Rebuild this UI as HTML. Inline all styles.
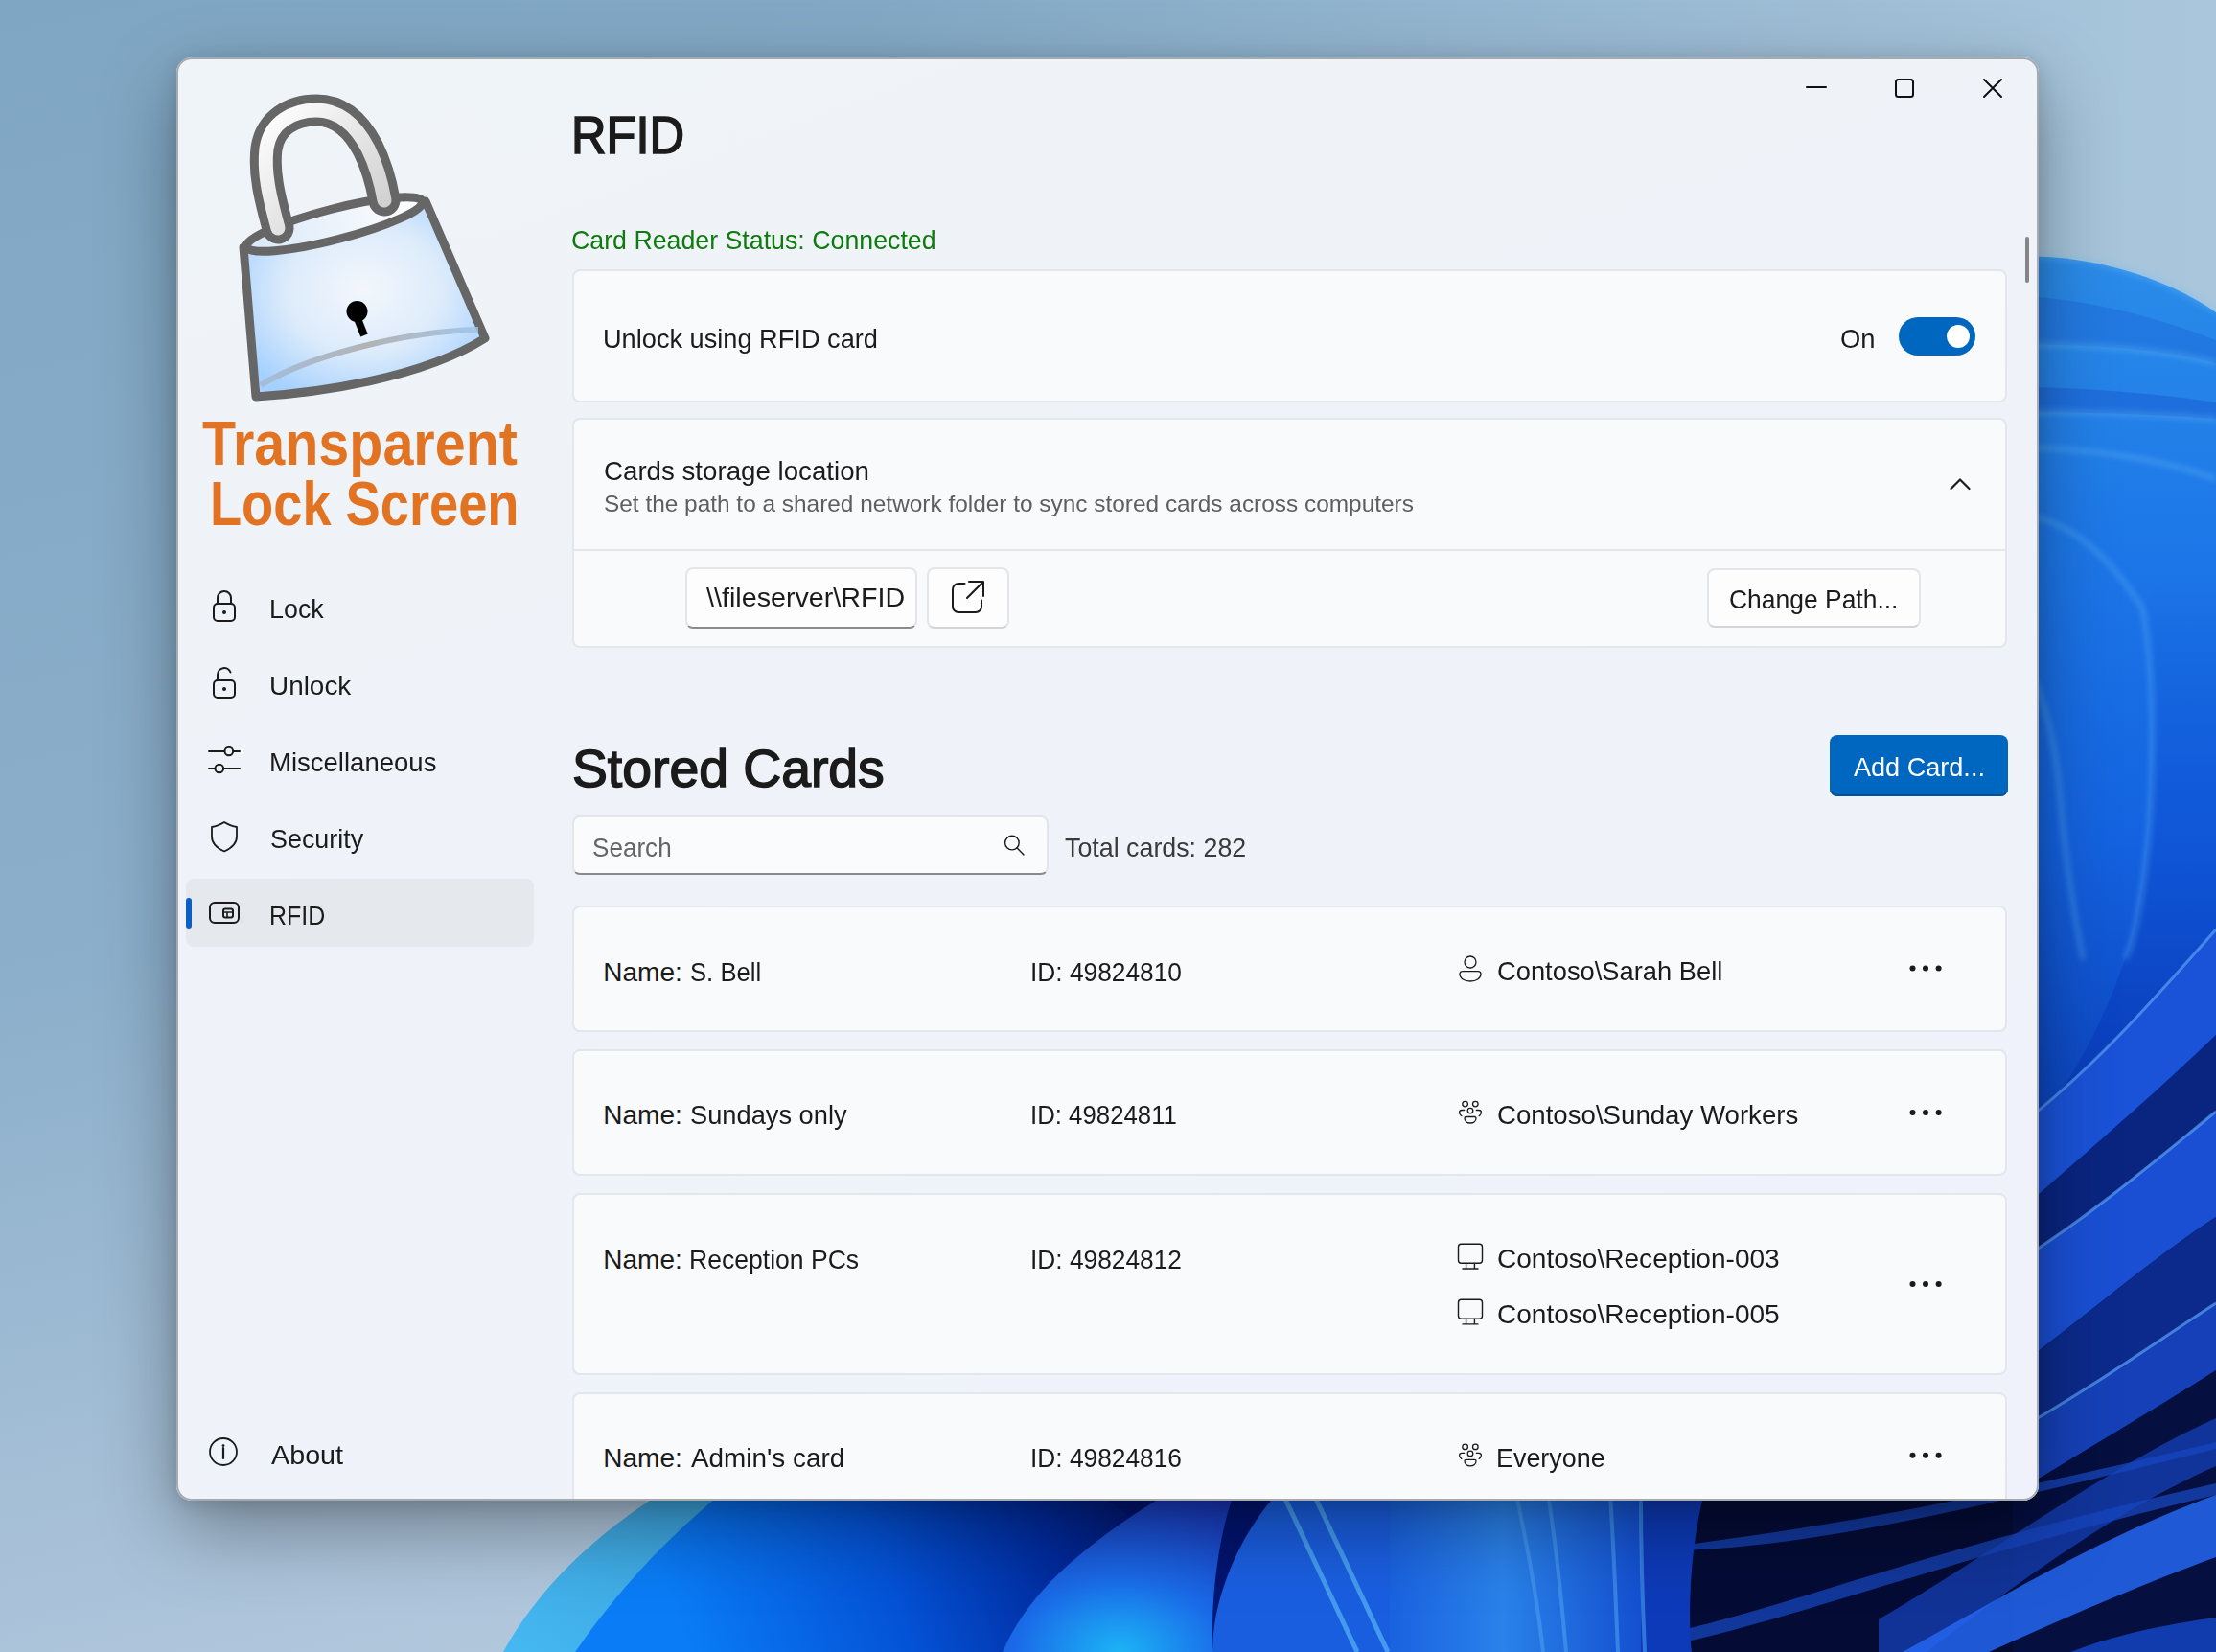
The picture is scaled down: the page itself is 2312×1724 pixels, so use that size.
<!DOCTYPE html>
<html><head><meta charset="utf-8">
<style>
html,body{margin:0;padding:0;width:2312px;height:1724px;overflow:hidden;background:#8fb0cc;}
.abs{position:absolute;}
.t{position:absolute;font-family:"Liberation Sans",sans-serif;line-height:1;white-space:nowrap;transform-origin:0 0;}
#win{position:absolute;left:184px;top:60px;width:1943px;height:1506px;border-radius:16px;
  box-shadow:0 30px 80px rgba(0,0,0,0.34),0 4px 20px rgba(0,0,0,0.14);}
#wininner{position:absolute;left:0;top:0;right:0;bottom:0;border-radius:16px;overflow:hidden;
  background:linear-gradient(160deg,#eff4f8 0%,#eff3f9 45%,#eff2fb 100%);}
#winborder{position:absolute;left:0;top:0;right:0;bottom:0;border-radius:16px;border:2px solid #a6a9ad;box-sizing:border-box;}
.card{position:absolute;background:#f9fafc;border:2px solid #e3e6ea;border-radius:8px;box-sizing:border-box;}
.btn{position:absolute;background:#fdfdfe;border:2px solid #e4e5e7;border-bottom-color:#d3d4d6;border-radius:8px;box-sizing:border-box;}
</style></head><body>
<svg class="abs" style="left:0;top:0" width="2312" height="1724" viewBox="0 0 2312 1724">
 <defs>
  <linearGradient id="bgbase" x1="0" y1="0" x2="0.3" y2="1">
   <stop offset="0" stop-color="#7fa6c3"/>
   <stop offset="0.55" stop-color="#8cafcb"/>
   <stop offset="1" stop-color="#b3c8dd"/>
  </linearGradient>
  <linearGradient id="bgtopr" x1="0" y1="0" x2="1" y2="0">
   <stop offset="0" stop-color="#a9c6dc" stop-opacity="0"/>
   <stop offset="1" stop-color="#a9c6dc" stop-opacity="1"/>
  </linearGradient>
  <linearGradient id="rstrip" x1="0" y1="0" x2="0" y2="1">
   <stop offset="0" stop-color="#2b8ce9"/>
   <stop offset="0.2" stop-color="#1d78e8"/>
   <stop offset="0.42" stop-color="#1462e0"/>
   <stop offset="0.6" stop-color="#0d47c2"/>
   <stop offset="0.78" stop-color="#08257a"/>
   <stop offset="1" stop-color="#050f44"/>
  </linearGradient>
  <linearGradient id="cyanEdge" x1="0" y1="1" x2="1" y2="0">
   <stop offset="0" stop-color="#45b8f2"/>
   <stop offset="1" stop-color="#3a9fd8"/>
  </linearGradient>
  <linearGradient id="blueMass" gradientUnits="userSpaceOnUse" x1="720" y1="1724" x2="1180" y2="1560">
   <stop offset="0" stop-color="#0a7cf6"/>
   <stop offset="0.45" stop-color="#0452d6"/>
   <stop offset="0.8" stop-color="#012a9c"/>
   <stop offset="1" stop-color="#001872"/>
  </linearGradient>
  <radialGradient id="blob" cx="0.5" cy="1" r="1">
   <stop offset="0" stop-color="#1cb4f6"/>
   <stop offset="0.45" stop-color="#1a6ae8"/>
   <stop offset="1" stop-color="#1a35b8"/>
  </radialGradient>
  <linearGradient id="midBlue" x1="0" y1="0" x2="1" y2="0">
   <stop offset="0" stop-color="#0c3cb8"/>
   <stop offset="0.35" stop-color="#1a72ee"/>
   <stop offset="0.7" stop-color="#1a66e6"/>
   <stop offset="1" stop-color="#0d3fc0"/>
  </linearGradient>
  <linearGradient id="band" x1="0" y1="0" x2="0" y2="1">
   <stop offset="0" stop-color="#2f7df0"/>
   <stop offset="1" stop-color="#0d2f9e"/>
  </linearGradient>
  <clipPath id="brclip"><path d="M1760,1250 L2312,1250 L2312,1724 L1760,1724 Z"/></clipPath>
  <linearGradient id="darkPetal" gradientUnits="userSpaceOnUse" x1="0" y1="600" x2="0" y2="1150"><stop offset="0" stop-color="#0c4fd2" stop-opacity="0"/><stop offset="0.5" stop-color="#0c4fd2" stop-opacity="0.6"/><stop offset="1" stop-color="#0a3ab8" stop-opacity="0.9"/></linearGradient>
  <linearGradient id="midBlue2" x1="0" y1="0" x2="1" y2="0"><stop offset="0" stop-color="#1a62e0"/><stop offset="0.45" stop-color="#2a82ea"/><stop offset="1" stop-color="#1450d0"/></linearGradient>
  <filter id="soft" x="-5%" y="-5%" width="110%" height="110%"><feGaussianBlur stdDeviation="3"/></filter>
 </defs>
 <rect width="2312" height="1724" fill="url(#bgbase)"/>
 <rect x="900" width="1412" height="620" fill="url(#bgtopr)"/>
 <!-- right strip bloom -->
 <path d="M2100,268 C2180,264 2260,290 2312,326 L2312,1724 L2100,1724 Z" fill="url(#rstrip)"/>
 <path d="M2100,309 C2180,310 2260,335 2312,355 L2312,379 C2260,365 2180,358 2100,360 Z" fill="#1f6fdc" opacity="0.6"/>
 <path d="M2100,404 C2180,404 2260,412 2312,420 L2312,437 C2260,433 2180,430 2100,430 Z" fill="#1a62d6" opacity="0.6"/>
 <path d="M2236,636 C2248,700 2248,800 2241,879 C2235,940 2225,990 2217,1001 C2190,1080 2150,1150 2100,1200 L2312,1200 L2312,560 C2280,580 2250,600 2236,636 Z" fill="url(#darkPetal)"/>
 <g fill="none" stroke="#6cc0fa" stroke-width="3" opacity="0.6" filter="url(#soft)">
  <path d="M2100,268 C2180,264 2260,290 2312,326"/>
  <path d="M2100,360 C2180,358 2260,365 2312,379"/>
  <path d="M2100,430 C2180,430 2260,433 2312,437"/>
  <path d="M2100,467 C2180,467 2260,480 2312,500"/>
  <path d="M2100,535 C2150,540 2193,568 2236,636 C2248,700 2248,800 2241,879 C2235,940 2225,990 2217,1001"/>
  <path d="M2100,680 C2130,700 2145,780 2149,830 C2155,900 2165,960 2173,1001"/>
  
 </g>
 <!-- bottom-right navy with bands -->
 <rect x="1760" y="1552" width="340" height="172" fill="#050f40"/>
 <g clip-path="url(#brclip)">
  <rect x="1760" y="1250" width="552" height="474" fill="#040c36"/>
  <path d="M2100,1250 L2312,1250 L2312,1000 C2250,1080 2180,1140 2100,1200 Z" fill="#0d3ab8"/>
 </g>
 <g>
  <path d="M2100,1180 C2180,1120 2250,1040 2312,970 L2312,1080 C2250,1140 2180,1200 2100,1270 Z" fill="#1a52d8"/>
  <path d="M2100,1270 C2180,1200 2250,1140 2312,1080 L2312,1160 C2250,1210 2180,1270 2100,1320 Z" fill="#0a2580"/>
  <path d="M2100,1320 C2180,1270 2250,1210 2312,1160 L2312,1270 C2250,1310 2180,1370 2100,1430 Z" fill="#1a4fd4"/>
  <path d="M2100,1430 C2180,1370 2250,1310 2312,1270 L2312,1360 C2250,1400 2180,1450 2100,1495 Z" fill="#0c2a8c"/>
  <path d="M2100,1495 C2180,1450 2250,1400 2312,1360 L2312,1430 C2250,1470 2180,1510 2100,1560 Z" fill="#1540b8"/>
  <path d="M2100,1560 C2180,1510 2250,1470 2312,1430 L2312,1724 L2100,1724 Z" fill="#050f40"/>
  
  <g fill="none" stroke="#5aa0f5" stroke-width="3" opacity="0.7">
   <path d="M2100,1180 C2180,1120 2250,1040 2312,970"/>
   <path d="M2100,1320 C2180,1270 2250,1210 2312,1160"/>
   <path d="M2100,1495 C2180,1450 2250,1400 2312,1360"/>
  </g>
 </g>
 <g>
  
  <path d="M1760,1612 C1880,1595 2000,1580 2312,1505 L2312,1512 C2000,1590 1880,1612 1760,1618 Z" fill="#1d55e0" opacity="0.6"/>
  <path d="M1760,1700 C1900,1665 2020,1615 2312,1548 L2312,1560 C2030,1628 1900,1680 1764,1712 Z" fill="#1d55e0" opacity="0.6"/>
  <path d="M1960,1690 C2080,1620 2200,1530 2312,1480 L2312,1530 C2220,1570 2120,1640 2010,1724 L1960,1724 Z" fill="#1745c0" opacity="0.7"/>
  <path d="M1985,1724 C2100,1660 2200,1600 2312,1560 L2312,1625 C2230,1655 2150,1690 2075,1724 Z" fill="#2466f0" opacity="0.85"/>
  <path d="M2160,1724 C2210,1705 2260,1695 2312,1688 L2312,1724 Z" fill="#1447c8" opacity="0.8"/>
 </g>
 <!-- bottom strip -->
 <path d="M598,1724 C640,1660 690,1610 758,1552 L1760,1552 L1760,1724 Z" fill="url(#blueMass)"/>
 <path d="M525,1724 C560,1660 620,1600 700,1552 L760,1552 C690,1610 645,1660 600,1724 Z" fill="url(#cyanEdge)"/>
 <path d="M1140,1552 L1360,1552 L1300,1680 L1200,1600 Z" fill="#021470" opacity="0.9"/>
 <path d="M1046,1724 C1070,1670 1110,1630 1184,1580 C1200,1570 1215,1560 1230,1552 L1290,1552 C1270,1600 1262,1680 1266,1724 Z" fill="url(#blob)"/>
 <path d="M1266,1724 C1262,1680 1290,1600 1339,1552 L1450,1552 L1450,1724 Z" fill="#1a5ee0"/>
 <path d="M1450,1552 L1712,1552 L1712,1724 L1450,1724 Z" fill="url(#midBlue2)"/>
 <path d="M1712,1552 L1780,1552 C1765,1600 1760,1680 1765,1724 L1712,1724 Z" fill="#0d3ab8"/>
 <g fill="none" stroke="#52aef5" stroke-width="5" opacity="0.75">
  <path d="M1339,1560 L1416,1724"/>
  <path d="M1371,1560 L1448,1724"/>
 </g>
 <g fill="none" stroke="#4a9ef2" stroke-width="4" opacity="0.6">
  <path d="M1582,1560 C1595,1620 1605,1680 1610,1724"/>
  <path d="M1615,1560 C1625,1620 1630,1680 1634,1724"/>
  <path d="M1680,1560 C1684,1620 1686,1680 1688,1724"/>
  <path d="M1712,1560 C1712,1620 1714,1680 1716,1724"/>
 </g>
</svg>

<div id="win"><div id="wininner"></div><div id="winborder"></div></div>
<!-- content layer, absolute page coords, clipped to window -->
<div class="abs" style="left:186px;top:62px;width:1939px;height:1502px;overflow:hidden;border-radius:14px;">
 <div class="abs" style="left:-186px;top:-62px;width:2312px;height:1724px;">
  <!-- selected nav -->
  <div class="abs" style="left:194px;top:917px;width:363px;height:71px;border-radius:8px;background:#e5e8ed;"></div>
  <div class="abs" style="left:194px;top:937px;width:6px;height:32px;border-radius:3px;background:#0a5fc4;"></div>
  <!-- cards -->
  <div class="card" style="left:597px;top:281px;width:1497px;height:139px;"></div>
  <div class="card" style="left:597px;top:436px;width:1497px;height:240px;"></div>
  <div class="abs" style="left:599px;top:573px;width:1493px;height:2px;background:#e3e6ea;"></div>
  <div class="btn" style="left:715px;top:592px;width:242px;height:64px;border-bottom:2px solid #8c8c8c;"></div>
  <div class="btn" style="left:967px;top:592px;width:86px;height:64px;"></div>
  <div class="btn" style="left:1781px;top:593px;width:223px;height:62px;"></div>
  <!-- toggle -->
  <div class="abs" style="left:1981px;top:331px;width:80px;height:40px;border-radius:20px;background:#0067c0;"></div>
  <div class="abs" style="left:2031px;top:339px;width:24px;height:24px;border-radius:12px;background:#fff;"></div>
  <!-- add card -->
  <div class="abs" style="left:1909px;top:767px;width:186px;height:64px;border-radius:8px;background:#0067c0;box-shadow:inset 0 -2px 0 #0a4f96;"></div>
  <!-- search -->
  <div class="btn" style="left:597px;top:851px;width:497px;height:62px;background:#fafbfc;border-bottom:2px solid #8a8a8a;"></div>
  <!-- rows -->
  <div class="card" style="left:597px;top:945px;width:1497px;height:132px;"></div>
  <div class="card" style="left:597px;top:1095px;width:1497px;height:132px;"></div>
  <div class="card" style="left:597px;top:1245px;width:1497px;height:190px;"></div>
  <div class="card" style="left:597px;top:1453px;width:1497px;height:200px;"></div>
  <!-- scrollbar -->
  <div class="abs" style="left:2113px;top:247px;width:4px;height:48px;border-radius:2px;background:#858589;"></div>
  <svg class="abs" style="left:0;top:0" width="2312" height="700" viewBox="0 0 2312 700">
 <defs>
  <linearGradient id="shk" x1="0" y1="0" x2="1" y2="1">
   <stop offset="0" stop-color="#ffffff"/>
   <stop offset="1" stop-color="#cccccc"/>
  </linearGradient>
  <radialGradient id="body" cx="0.5" cy="0.45" r="0.6">
   <stop offset="0" stop-color="#f3f7fc"/>
   <stop offset="0.55" stop-color="#dcebfb"/>
   <stop offset="1" stop-color="#a6d1ff"/>
  </radialGradient>
  <linearGradient id="rimg" x1="0" y1="0" x2="1" y2="0">
   <stop offset="0" stop-color="#d9e8f8"/>
   <stop offset="1" stop-color="#ffffff"/>
  </linearGradient>
  <linearGradient id="bowl" x1="0" y1="0" x2="1" y2="0">
   <stop offset="0" stop-color="#a3bad3"/>
   <stop offset="0.5" stop-color="#a9a9a9"/>
   <stop offset="1" stop-color="#9ec3e6"/>
  </linearGradient>
 </defs>
 <!-- body -->
 <path d="M254,258 L267,414 C330,410 440,395 506,353 L444,210 Z" fill="url(#body)" stroke="#666" stroke-width="9" stroke-linejoin="round"/>
 <path d="M272,402 C320,372 420,346 499,344" fill="none" stroke="url(#bowl)" stroke-width="6" opacity="0.85"/>
 <!-- rim -->
 <ellipse cx="349" cy="234" rx="95" ry="16" transform="rotate(-14.4 349 234)" fill="url(#rimg)" stroke="#666" stroke-width="9"/>
 <!-- shackle -->
 <path d="M290,238 C281,205 275,180 278,155 C282,128 305,115 330,115 C355,115 372,132 384,155 C394,175 398,192 401,209" fill="none" stroke="#666" stroke-width="33" stroke-linecap="round"/>
 <path d="M290,238 C281,205 275,180 278,155 C282,128 305,115 330,115 C355,115 372,132 384,155 C394,175 398,192 401,209" fill="none" stroke="url(#shk)" stroke-width="15" stroke-linecap="round"/>
 <!-- keyhole -->
 <circle cx="372.5" cy="325" r="11" fill="#000"/>
 <path d="M372,330 L380,350" stroke="#000" stroke-width="8"/>
</svg>

  <svg class="abs" style="left:0;top:0" width="2312" height="1724" viewBox="0 0 2312 1724" fill="none" stroke="#1b1b1b" stroke-width="2" stroke-linecap="round" stroke-linejoin="round">
 <!-- title bar -->
 <path d="M1885,91 H1905" stroke="#111"/>
 <rect x="1978" y="83" width="18" height="18" rx="2.5" stroke="#111"/>
 <path d="M2070,83 L2088,101 M2088,83 L2070,101" stroke="#111"/>
 <!-- nav lock -->
 <rect x="223" y="630" width="22" height="18" rx="4"/>
 <path d="M227,630 V624 A7,7 0 0 1 241,624 V630"/>
 <circle cx="234" cy="639" r="2" fill="#1b1b1b" stroke="none"/>
 <!-- nav unlock -->
 <rect x="223" y="710" width="22" height="18" rx="4"/>
 <path d="M227,710 V704 A7,7 0 0 1 240.5,701.5"/>
 <circle cx="234" cy="719" r="2" fill="#1b1b1b" stroke="none"/>
 <!-- misc sliders -->
 <path d="M218,784 H234 M243.5,784 H250 M218,802 H224 M233.5,802 H250"/>
 <circle cx="238.8" cy="784" r="4.3"/>
 <circle cx="228.8" cy="802" r="4.3"/>
 <!-- shield -->
 <path d="M234,858 C229,861 225,862.5 221,863 V873 C221,880 226,885 234,888.5 C242,885 247,880 247,873 V863 C243,862.5 239,861 234,858 Z" stroke-width="1.8"/>
 <!-- rfid -->
 <rect x="219" y="942" width="30" height="21" rx="5"/>
 <rect x="233" y="948.5" width="10" height="9" rx="2"/>
 <path d="M233,952 H243 M237,952 V957.5" stroke-width="1.6"/>
 <!-- about -->
 <circle cx="233" cy="1515" r="14" stroke-width="1.8"/>
 <path d="M233,1511 V1522" stroke-width="2.2"/>
 <circle cx="233" cy="1508.6" r="1.4" fill="#1b1b1b" stroke="none"/>
 <!-- chevron -->
 <path d="M2035.5,510 L2045,500.5 L2054.5,510" stroke-width="2.2"/>
 <!-- open icon -->
 <path d="M1006.5,609 H1000 A6,6 0 0 0 994,615 V633 A6,6 0 0 0 1000,639 H1018 A6,6 0 0 0 1024,633 V626.5" stroke-width="2"/>
 <path d="M1011,607 H1026 V622 M1025.5,607.5 L1009,624" stroke-width="2"/>
 <!-- search icon -->
 <circle cx="1055.9" cy="879.6" r="7.3" stroke-width="1.4"/>
 <path d="M1061,884.8 L1068,892" stroke-width="1.4"/>
 <!-- person -->
 <g stroke-width="1.3">
 <circle cx="1534" cy="1004" r="6"/>
 <path d="M1526,1013.6 H1542 A3,3 0 0 1 1545,1016.6 C1545,1021 1540,1024 1534,1024 C1528,1024 1523,1021 1523,1016.6 A3,3 0 0 1 1526,1013.6 Z"/>
 </g>
 <!-- group icons -->
 <g id="grp" stroke-width="1.3">
 <circle cx="1528.6" cy="1152.1" r="2.8"/>
 <circle cx="1539.3" cy="1152.1" r="2.8"/>
 <circle cx="1534" cy="1159.1" r="2.8"/>
 <path d="M1527.7,1158.5 H1525.2 C1523.2,1158.5 1522.6,1160 1522.6,1161 C1522.6,1162.5 1523.6,1163.8 1524.8,1164.6"/>
 <path d="M1540.3,1158.5 H1542.8 C1544.8,1158.5 1545.4,1160 1545.4,1161 C1545.4,1162.5 1544.4,1163.8 1543.2,1164.6"/>
 <path d="M1529.5,1165.5 H1538.5 A1.5,1.5 0 0 1 1540,1167 C1540,1170 1537.5,1172 1534,1172 C1530.5,1172 1528,1170 1528,1167 A1.5,1.5 0 0 1 1529.5,1165.5 Z"/>
 </g>
 <use href="#grp" x="0" y="357.8"/>
 <!-- monitors -->
 <g id="mon" stroke-width="1.4">
 <rect x="1521.5" y="1298.3" width="25" height="20" rx="3"/>
 <path d="M1529.6,1318.5 V1324 M1538.4,1318.5 V1324 M1526,1324 H1542"/>
 </g>
 <use href="#mon" x="0" y="57.9"/>
 <!-- dots -->
 <g fill="#1b1b1b" stroke="none">
 <circle cx="1995.5" cy="1010.6" r="3"/><circle cx="2009" cy="1010.6" r="3"/><circle cx="2022.6" cy="1010.6" r="3"/>
 <circle cx="1995.5" cy="1160.9" r="3"/><circle cx="2009" cy="1160.9" r="3"/><circle cx="2022.6" cy="1160.9" r="3"/>
 <circle cx="1995.5" cy="1340" r="3"/><circle cx="2009" cy="1340" r="3"/><circle cx="2022.6" cy="1340" r="3"/>
 <circle cx="1995.5" cy="1518.8" r="3"/><circle cx="2009" cy="1518.8" r="3"/><circle cx="2022.6" cy="1518.8" r="3"/>
 </g>
</svg>

  <div class='t' style='left:281.08px;top:622.00px;font-size:28px;font-weight:400;color:#1b1b1b;transform:scaleX(0.9596)'>Lock</div>
<div class='t' style='left:281.01px;top:702.30px;font-size:28px;font-weight:400;color:#1b1b1b;transform:scaleX(0.9964)'>Unlock</div>
<div class='t' style='left:281.03px;top:781.70px;font-size:28px;font-weight:400;color:#1b1b1b;transform:scaleX(0.9829)'>Miscellaneous</div>
<div class='t' style='left:282.04px;top:862.40px;font-size:28px;font-weight:400;color:#1b1b1b;transform:scaleX(0.9610)'>Security</div>
<div class='t' style='left:281.21px;top:941.80px;font-size:28px;font-weight:400;color:#1b1b1b;transform:scaleX(0.8935)'>RFID</div>
<div class='t' style='left:282.50px;top:1505.30px;font-size:28px;font-weight:400;color:#1b1b1b;transform:scaleX(1.0260)'>About</div>
<div class='t' style='left:596.38px;top:113.20px;font-size:56px;font-weight:400;-webkit-text-stroke:1.6px #1b1b1b;color:#1b1b1b;transform:scaleX(0.9040)'>RFID</div>
<div class='t' style='left:596.34px;top:237.00px;font-size:28px;font-weight:400;color:#0f7b0f;transform:scaleX(0.9551)'>Card Reader Status: Connected</div>
<div class='t' style='left:629.46px;top:340.00px;font-size:28px;font-weight:400;color:#1b1b1b;transform:scaleX(0.9705)'>Unlock using RFID card</div>
<div class='t' style='left:1920.02px;top:340.00px;font-size:28px;font-weight:400;color:#1b1b1b;transform:scaleX(0.9771)'>On</div>
<div class='t' style='left:630.01px;top:478.00px;font-size:28px;font-weight:400;color:#1b1b1b;transform:scaleX(0.9885)'>Cards storage location</div>
<div class='t' style='left:629.98px;top:513.80px;font-size:24px;font-weight:400;color:#5e5e5e;transform:scaleX(1.0166)'>Set the path to a shared network folder to sync stored cards across computers</div>
<div class='t' style='left:737.30px;top:609.50px;font-size:28px;font-weight:400;color:#1b1b1b;transform:scaleX(1.0249)'>\\fileserver\RFID</div>
<div class='t' style='left:1804.06px;top:612.30px;font-size:28px;font-weight:400;color:#1b1b1b;transform:scaleX(0.9446)'>Change Path...</div>
<div class='t' style='left:597.41px;top:773.80px;font-size:56px;font-weight:400;-webkit-text-stroke:1.6px #1b1b1b;color:#1b1b1b;transform:scaleX(0.9872)'>Stored Cards</div>
<div class='t' style='left:1933.50px;top:787.00px;font-size:28px;font-weight:400;color:#ffffff;transform:scaleX(0.9669)'>Add Card...</div>
<div class='t' style='left:618.47px;top:870.60px;font-size:28px;font-weight:400;color:#646464;transform:scaleX(0.9314)'>Search</div>
<div class='t' style='left:1110.90px;top:870.60px;font-size:28px;font-weight:400;color:#3a3a3a;transform:scaleX(0.9574)'>Total cards: 282</div>
<div class='t' style='left:629.30px;top:1000.60px;font-size:28px;font-weight:400;color:#1b1b1b;transform:scaleX(1.0000)'>Name:</div>
<div class='t' style='left:720.38px;top:1000.60px;font-size:28px;font-weight:400;color:#1b1b1b;transform:scaleX(0.9167)'>S. Bell</div>
<div class='t' style='left:1074.52px;top:1000.60px;font-size:28px;font-weight:400;color:#1b1b1b;transform:scaleX(0.9394)'>ID: 49824810</div>
<div class='t' style='left:1561.82px;top:999.80px;font-size:28px;font-weight:400;color:#1b1b1b;transform:scaleX(0.9757)'>Contoso\Sarah Bell</div>
<div class='t' style='left:629.30px;top:1150.00px;font-size:28px;font-weight:400;color:#1b1b1b;transform:scaleX(1.0000)'>Name:</div>
<div class='t' style='left:720.33px;top:1150.00px;font-size:28px;font-weight:400;color:#1b1b1b;transform:scaleX(0.9731)'>Sundays only</div>
<div class='t' style='left:1074.56px;top:1150.00px;font-size:28px;font-weight:400;color:#1b1b1b;transform:scaleX(0.9209)'>ID: 49824811</div>
<div class='t' style='left:1561.81px;top:1149.80px;font-size:28px;font-weight:400;color:#1b1b1b;transform:scaleX(0.9868)'>Contoso\Sunday Workers</div>
<div class='t' style='left:629.30px;top:1300.60px;font-size:28px;font-weight:400;color:#1b1b1b;transform:scaleX(1.0000)'>Name:</div>
<div class='t' style='left:719.40px;top:1300.60px;font-size:28px;font-weight:400;color:#1b1b1b;transform:scaleX(0.9484)'>Reception PCs</div>
<div class='t' style='left:1074.52px;top:1300.60px;font-size:28px;font-weight:400;color:#1b1b1b;transform:scaleX(0.9394)'>ID: 49824812</div>
<div class='t' style='left:1561.80px;top:1299.80px;font-size:28px;font-weight:400;color:#1b1b1b;transform:scaleX(1.0017)'>Contoso\Reception-003</div>
<div class='t' style='left:1561.80px;top:1357.70px;font-size:28px;font-weight:400;color:#1b1b1b;transform:scaleX(1.0017)'>Contoso\Reception-005</div>
<div class='t' style='left:629.30px;top:1507.50px;font-size:28px;font-weight:400;color:#1b1b1b;transform:scaleX(1.0000)'>Name:</div>
<div class='t' style='left:721.30px;top:1507.50px;font-size:28px;font-weight:400;color:#1b1b1b;transform:scaleX(0.9950)'>Admin&#x27;s card</div>
<div class='t' style='left:1074.52px;top:1507.50px;font-size:28px;font-weight:400;color:#1b1b1b;transform:scaleX(0.9394)'>ID: 49824816</div>
<div class='t' style='left:1560.88px;top:1507.50px;font-size:28px;font-weight:400;color:#1b1b1b;transform:scaleX(0.9609)'>Everyone</div>
<div class='t' style='left:211.40px;top:431.00px;font-size:64px;font-weight:700;color:#e27322;transform:scaleX(0.8978)'>Transparent</div>
<div class='t' style='left:218.61px;top:494.30px;font-size:64px;font-weight:700;color:#e27322;transform:scaleX(0.8472)'>Lock Screen</div>
 </div>
</div>
</body></html>
